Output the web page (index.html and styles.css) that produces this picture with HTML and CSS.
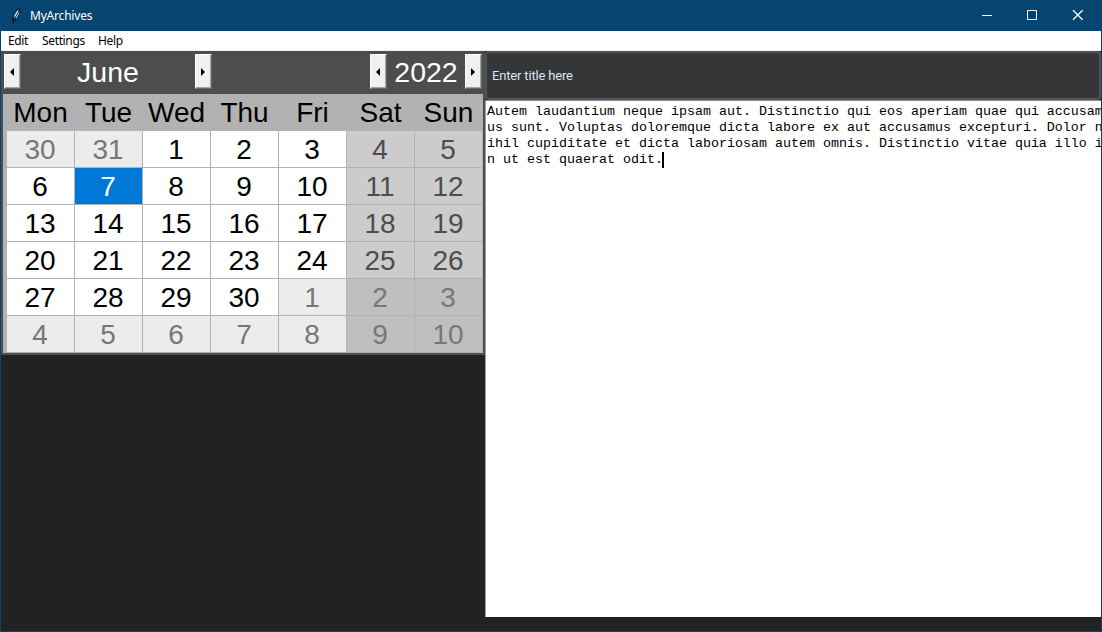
FILE: index.html
```html
<!DOCTYPE html>
<html lang="en">
<head>
<meta charset="utf-8">
<title>MyArchives</title>
<link rel="stylesheet" href="styles.css">
</head>
<body>
<div class="window">
  <header class="titlebar">
    <svg class="feather" width="16" height="16" viewBox="0 0 16 16"><path d="M5.300 12.500C4.500 8 6.500 3 11.500 .8C12.800 4 10.800 9.500 7 12Z" fill="#5f9fdc" stroke="#06111c" stroke-width="1.100"/><path d="M5 15.500L6 12L8.500 7L10.500 3" fill="none" stroke="#06111c" stroke-width="1.100"/><path d="M6.700 8.500L10 2.800" stroke="#d3eaff" stroke-width="1.200"/><path d="M8 10.500L11 5" stroke="#7db8f0" stroke-width="1.100"/></svg>
    <span class="app-name">MyArchives</span>
    <div class="controls">
      <svg width="46" height="31" viewBox="0 0 46 31"><path d="M18 15.5H28" stroke="#fff"/></svg>
      <svg width="46" height="31" viewBox="0 0 46 31"><path d="M17.500 10.500H26.500V19.500H17.500Z" fill="none" stroke="#fff"/></svg>
      <svg width="46" height="31" viewBox="0 0 46 31"><path d="M17 10.200L26.600 19.800M26.600 10.200L17 19.800" stroke="#fff" stroke-width="1.300"/></svg>
    </div>
  </header>
  <nav class="menu"><span class="m-edit">Edit</span><span class="m-settings">Settings</span><span class="m-help">Help</span></nav>
  <main class="content">
    <section class="left">
      <div class="calendar">
        <div class="cal-head">
          <div class="month"><button class="arrow"><svg width="4" height="8" viewBox="0 0 4 8"><path d="M4 0V8L0 4Z"/></svg></button><span class="label">June</span><button class="arrow"><svg width="4" height="8" viewBox="0 0 4 8"><path d="M0 0V8L4 4Z"/></svg></button></div>
          <div class="year"><button class="arrow"><svg width="4" height="8" viewBox="0 0 4 8"><path d="M4 0V8L0 4Z"/></svg></button><span class="label">2022</span><button class="arrow"><svg width="4" height="8" viewBox="0 0 4 8"><path d="M0 0V8L4 4Z"/></svg></button></div>
        </div>
        <div class="days">
          <span class="dn">Mon</span><span class="dn">Tue</span><span class="dn">Wed</span><span class="dn">Thu</span><span class="dn">Fri</span><span class="dn">Sat</span><span class="dn">Sun</span>
          <span class="om">30</span><span class="om">31</span><span>1</span><span>2</span><span>3</span><span class="we">4</span><span class="we">5</span>
          <span>6</span><span class="sel">7</span><span>8</span><span>9</span><span>10</span><span class="we">11</span><span class="we">12</span>
          <span>13</span><span>14</span><span>15</span><span>16</span><span>17</span><span class="we">18</span><span class="we">19</span>
          <span>20</span><span>21</span><span>22</span><span>23</span><span>24</span><span class="we">25</span><span class="we">26</span>
          <span>27</span><span>28</span><span>29</span><span>30</span><span class="om">1</span><span class="owe">2</span><span class="owe">3</span>
          <span class="om">4</span><span class="om">5</span><span class="om">6</span><span class="om">7</span><span class="om">8</span><span class="owe">9</span><span class="owe">10</span>
        </div>
      </div>
    </section>
    <section class="right">
      <div class="entry-wrap"><div class="entry">Enter title here</div></div>
      <div class="editor">Autem laudantium neque ipsam aut. Distinctio qui eos aperiam quae qui accusam
us sunt. Voluptas doloremque dicta labore ex aut accusamus excepturi. Dolor n
ihil cupiditate et dicta laboriosam autem omnis. Distinctio vitae quia illo i
n ut est quaerat odit.<span class="caret"></span></div>
    </section>
  </main>
</div>
</body>
</html>
```
FILE: styles.css
```css
* { box-sizing: border-box; }
body { margin: 0; background: #212224; }
.window {
  width: 1102px; height: 632px;
  display: flex; flex-direction: column;
  background: #05456f;
  overflow: hidden;
}
.titlebar {
  height: 31px; flex: none;
  display: flex; align-items: center;
  padding-left: 8px;
  color: #fff;
  font: 12px/31px "Noto Sans", sans-serif;
}
.feather { flex: none; margin-right: 6px; }
.app-name { font-size: 12px; letter-spacing: -0.2px; }
.controls { margin-left: auto; display: flex; height: 31px; }
.menu {
  height: 20px; flex: none;
  margin: 0 1px;
  display: flex;
  background: #fff;
  border-bottom: 1px solid #f0f0f0;
  font: 12px/20px "Noto Sans", sans-serif;
  color: #000;
  padding-left: 7px;
  letter-spacing: -0.35px;
}
.m-edit { width: 34px; }
.m-settings { width: 56px; }
.content {
  flex: 1; min-height: 0;
  display: flex;
  margin: 0 1px 1px;
  background: #212224;
}
.left { width: 484px; flex: none; }
.calendar {
  height: 304px;
  background: #4d4d4d;
  padding: 0 2px 2px;
}
.cal-head {
  height: 43px;
  display: flex; justify-content: space-between;
  padding: 3px 1px 5px;
  color: #fff;
  font: 28.500px/37px "Liberation Sans", Arial, sans-serif;
}
.month, .year { display: flex; height: 35px; }
.month { width: 208px; }
.year { width: 112px; }
.label { flex: 1; text-align: center; }
.arrow {
  width: 17px; height: 35px; flex: none;
  padding: 0 2px 0 0;
  display: flex; align-items: center; justify-content: center;
  background: #f0f0f0;
  border: 1px solid;
  border-color: #fff #696969 #696969 #fff;
  box-shadow: inset -1px -1px #a0a0a0;
}
.days {
  display: grid;
  grid-template-columns: repeat(7, 68px);
  grid-template-rows: 37px repeat(6, 37px);
  padding-left: 4px;
  background: #b2b2b2;
  font: 28px/38px "Liberation Sans", Arial, sans-serif;
  color: #000;
  text-align: center;
}
.days span {
  padding-right: 1px;
  background: #fff;
  border-right: 1px solid #b2b2b2;
  border-bottom: 1px solid #b2b2b2;
  overflow: hidden;
}
.days .dn { background: #b2b2b2; border-bottom: 0; padding-right: 0; }
.days .om { background: #ececec; color: #777; }
.days .we { background: #ccc; color: #4d4d4d; }
.days .owe { background: #bfbfbf; color: #777; }
.days .sel { background: #0078d7; color: #fff; }
.right {
  flex: 1; min-width: 0;
  display: flex; flex-direction: column;
}
.entry-wrap { height: 50px; flex: none; border-bottom: 1px solid #8a8a8c; }
.entry {
  height: 49px;
  border: 2px solid #505557;
  border-radius: 4px;
  background: #353638;
  color: #dce4ee;
  padding-left: 5px;
  font: 13px/45px Roboto, sans-serif;
  letter-spacing: -0.17px;
}
.editor {
  height: 516px;
  border-left: 1px solid #a0a0a0;
  background: #fff;
  color: #000;
  padding: 3px 0 0 1px;
  font: 13.333px/16px "Liberation Mono", "Courier New", monospace;
  white-space: pre;
  overflow: hidden;
}
.caret {
  display: inline-block;
  width: 2px; height: 16px;
  margin-left: -1px;
  background: #000;
  vertical-align: top;
}
```
